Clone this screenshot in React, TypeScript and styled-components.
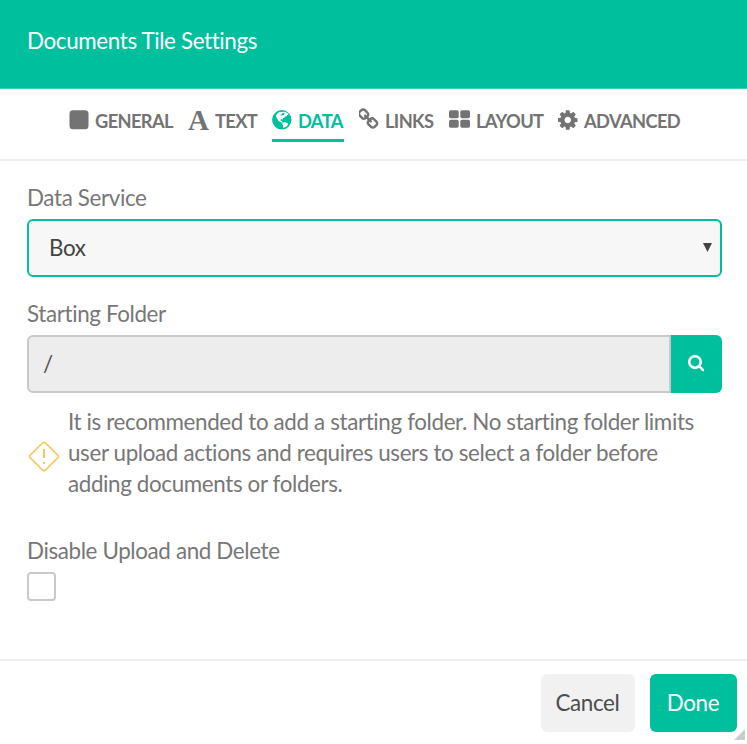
import React from "react";
import styled, { createGlobalStyle } from "styled-components";

const GlobalStyle = createGlobalStyle`
  *, *::before, *::after { box-sizing: border-box; }
  body { margin: 0; background: #fff; }
`;

const Dialog = styled.main`
  position: relative;
  display: flex;
  flex-direction: column;
  width: 747px;
  height: 744px;
  overflow: hidden;
  background: #fff;
  color: #777;
  font-family: Lato, "Liberation Sans", sans-serif;
  font-size: 22.4px;
  letter-spacing: -0.37px;
  line-height: 31px;
`;

const Header = styled.header`
  height: 89px;
  flex: none;
  padding: 25px 27px 0;
  background: #00bf9d;
  border-bottom: 1px solid #40cfb6;
  color: #fff;
`;

const Title = styled.h1`
  margin: 0;
  font-size: 22.4px;
  font-weight: 400;
  line-height: 31px;
`;

const Tabs = styled.nav`
  display: flex;
  gap: 15px;
  height: 72px;
  flex: none;
  padding: 18px 0 0 69px;
  border-bottom: 2px solid #eee;
`;

const Tab = styled.a<{ $active?: boolean; $width: number }>`
  display: flex;
  align-items: center;
  width: ${(p) => p.$width}px;
  height: 35px;
  padding-bottom: 5px;
  border-bottom: 3px solid ${(p) => (p.$active ? "#00bf9d" : "transparent")};
  color: ${(p) => (p.$active ? "#00bf9d" : "#737373")};
  font-size: 18.3px;
  font-weight: 700;
  letter-spacing: -0.63px;
  line-height: 24px;
  white-space: nowrap;
`;

const TabIcon = styled.span<{ $advance: number }>`
  width: ${(p) => p.$advance}px;
  flex: none;
  padding-bottom: 2px;
`;

const Icon = styled.svg`
  display: block;
  flex: none;
  fill: currentColor;
`;

const LetterIcon = styled.span`
  display: block;
  font-family: "Liberation Serif", serif;
  font-size: 29px;
  font-weight: 700;
  line-height: 22px;
`;

const Body = styled.section`
  flex: 1;
  padding: 21px 25px 0 27px;
`;

const Field = styled.div<{ $after?: number }>`
  display: flex;
  flex-direction: column;
  gap: 6px;
  margin-bottom: ${(p) => p.$after ?? 0}px;
`;

const Select = styled.div`
  display: flex;
  align-items: center;
  justify-content: space-between;
  height: 58px;
  padding: 0 8px 1px 20px;
  border: 2px solid #00bf9d;
  border-radius: 6px;
  background: #f7f7f7;
  color: #444;
`;

const InputGroup = styled.div`
  display: flex;
  height: 58px;
`;

const FolderInput = styled.div`
  flex: 1;
  padding: 11px 14px;
  border: 2px solid #c9c9c9;
  border-radius: 6px 0 0 6px;
  background: #ededed;
  color: #555;
`;

const SearchButton = styled.button`
  display: flex;
  align-items: center;
  justify-content: center;
  width: 51px;
  padding: 0 1px 1px 0;
  border: 0;
  border-radius: 0 6px 6px 0;
  background: #00bf9d;
  color: #fff;
`;

const Notice = styled.div`
  display: flex;
  align-items: center;
  gap: 7px;
  margin-bottom: 36px;
`;

const NoticeIcon = styled.span`
  padding-top: 6px;
`;

const NoticeText = styled.p`
  margin: 0;
  line-height: 30.8px;
  white-space: nowrap;
`;

const Checkbox = styled.span`
  width: 29px;
  height: 29px;
  border: 2px solid #c9c9c9;
  border-radius: 4px;
`;

const Footer = styled.footer`
  display: flex;
  justify-content: flex-end;
  gap: 15px;
  height: 85px;
  flex: none;
  padding: 13px 10.5px 0 0;
  border-top: 2px solid #eee;
`;

const Button = styled.button<{ $primary?: boolean }>`
  width: ${(p) => (p.$primary ? 87 : 94)}px;
  height: 58px;
  padding: 0 0 1px;
  border: 0;
  border-radius: 6px;
  background: ${(p) => (p.$primary ? "#00bf9d" : "#f1f1f1")};
  color: ${(p) => (p.$primary ? "#fff" : "#4c4c4c")};
  font: inherit;
  letter-spacing: inherit;
`;

const ResizeGrip = styled.svg`
  position: absolute;
  right: 2px;
  bottom: 4px;
`;

const SquareIcon = () => (
  <Icon width="20" height="20" viewBox="0 0 20 20">
    <rect x="0.5" y="0.3" width="19" height="19" rx="3.5" />
  </Icon>
);

const GlobeIcon = () => (
  <Icon width="20" height="20" viewBox="0 0 20 20">
    <circle cx="9.8" cy="9.8" r="9.7" />
    <path
      fill="#fff"
      d="M5.400 3.200 7.600 1.900 9.800 2.100 12.600 1.700 15.200 3 16.600 4.500 15.200 5 14.600 6.400 13.200 6.200 12.400 7.800 11 8.200 10.500 9.700 9.200 9.100 8.300 9.900 9 10.800 10.200 11.200 10.300 12.400 11.500 12.600 13.200 12.300 15.500 13.200 16.300 14.300 14.800 16.200 12.400 17.600 11.100 18 11.300 16 10.300 14.300 10.500 13 8.900 12.300 6.600 11 5.400 9 4.300 7.200 4.100 5.400Z"
    />
    <path d="M10.500 2.900 12.300 2.800 12.600 3.900 11.200 5.400 10 5 9.200 5.700 8.100 5 9.400 4.400Z" />
  </Icon>
);

const LinkIcon = () => (
  <Icon width="22.7" height="22.7" viewBox="120 0 1792 1792">
    <path d="M1456 1216q0-40-28-68l-208-208q-28-28-68-28-42 0-72 32 3 3 19 18.5t21.5 21.5 15 19 13 25.5 3.5 27.5q0 40-28 68t-68 28q-15 0-27.5-3.5t-25.5-13-19-15-21.5-21.5-18.5-19q-33 31-33 73 0 40 28 68l206 207q27 27 68 27 40 0 68-26l147-146q28-28 28-67zm-703-705q0-40-28-68l-206-207q-28-28-68-28-39 0-68 27l-147 146q-28 28-28 67 0 40 28 68l208 208q27 27 68 27 42 0 72-31-3-3-19-18.5t-21.500-21.500-15-19-13-25.500-3.500-27.500q0-40 28-68t68-28q15 0 27.500 3.500t25.500 13 19 15 21.500 21.500 18.500 19q33-31 33-73zm895 705q0 120-85 203l-147 146q-83 83-203 83-121 0-204-85l-206-207q-83-83-83-203 0-123 88-209l-88-88q-86 88-208 88-120 0-204-84l-208-208q-84-84-84-204t85-203l147-146q83-83 203-83 121 0 204 85l206 207q83 83 83 203 0 123-88 209l88 88q86-88 208-88 120 0 204 84l208 208q84 84 84 204z" />
  </Icon>
);

const LayoutIcon = () => (
  <Icon width="21" height="20" viewBox="0 0 21 20">
    <rect x="0" y="0.2" width="9.7" height="8" rx="1.7" />
    <rect x="11.300" y="0.2" width="9.700" height="8" rx="1.700" />
    <rect x="0" y="9.800" width="9.700" height="8" rx="1.700" />
    <rect x="11.300" y="9.800" width="9.700" height="8" rx="1.700" />
  </Icon>
);

const CogIcon = () => (
  <Icon width="19.5" height="20" viewBox="128 128 1536 1536">
    <path d="M1152 896q0-106-75-181t-181-75-181 75-75 181 75 181 181 75 181-75 75-181zm512-109v222q0 12-8 23t-20 13l-185 28q-19 54-39 91 35 50 107 138 10 12 10 25t-9 23q-27 37-99 108t-94 71q-12 0-26-9l-138-108q-44 23-91 38-16 136-29 186-7 28-36 28h-222q-14 0-24.500-8.500t-11.500-21.500l-28-184q-49-16-90-37l-141 107q-10 9-25 9-14 0-25-11-126-114-165-168-7-10-7-23 0-12 8-23 15-21 51-66.500t54-70.500q-27-50-41-99l-183-27q-13-2-21-12.500t-8-23.500v-222q0-12 8-23t19-13l186-28q14-46 39-92-40-57-107-138-10-12-10-24 0-10 9-23 26-36 98.500-107.500t94.500-71.500q13 0 26 10l138 107q44-23 91-38 16-136 29-186 7-28 36-28h222q14 0 24.500 8.500t11.500 21.500l28 184q49 16 90 37l142-107q9-9 24-9 13 0 25 10 129 119 165 170 7 8 7 22 0 12-8 23-15 21-51 66.500t-54 70.500q26 50 41 98l183 28q13 2 21 12.500t8 23.500z" />
  </Icon>
);

const SearchIcon = () => (
  <Icon width="16.500" height="16.500" viewBox="64 128 1664 1664">
    <path d="M1216 832q0-185-131.500-316.500t-316.500-131.500-316.500 131.500-131.500 316.500 131.500 316.500 316.500 131.500 316.500-131.500 131.500-316.500zm512 832q0 52-38 90t-90 38q-54 0-90-38l-343-342q-179 124-399 124-143 0-273.500-55.500t-225-150-150-225-55.500-273.500 55.500-273.500 150-225 225-150 273.500-55.500 273.500 55.500 225 150 150 225 55.500 273.500q0 220-124 399l343 343q37 37 37 90z" />
  </Icon>
);

const WarningIcon = () => (
  <Icon width="34" height="32" viewBox="0 0 34 32">
    <path
      d="M15.6 2.9Q17 1.700 18.400 2.900L30.700 15.100Q32 16.500 30.700 17.900L18.400 30Q17 31.200 15.600 30L3.300 17.900Q2 16.500 3.300 15.100Z"
      fill="none"
      stroke="#f6cb5e"
      strokeWidth="1.700"
    />
    <path d="M17 9v9M17 21.700v2.300" fill="none" stroke="#f6cb5e" strokeWidth="2" />
  </Icon>
);

const tabs = [
  { label: "GENERAL", icon: <SquareIcon />, width: 104, advance: 26 },
  { label: "TEXT", icon: <LetterIcon>A</LetterIcon>, width: 69, advance: 27 },
  { label: "DATA", icon: <GlobeIcon />, width: 72, advance: 26, active: true },
  { label: "LINKS", icon: <LinkIcon />, width: 75, advance: 26 },
  { label: "LAYOUT", icon: <LayoutIcon />, width: 94, advance: 27 },
  { label: "ADVANCED", icon: <CogIcon />, width: 122, advance: 26 },
];

export default function App() {
  return (
    <Dialog>
      <GlobalStyle />
      <Header>
        <Title>Documents Tile Settings</Title>
      </Header>
      <Tabs>
        {tabs.map((tab) => (
          <Tab key={tab.label} $active={tab.active} $width={tab.width}>
            <TabIcon $advance={tab.advance}>{tab.icon}</TabIcon>
            <span>{tab.label}</span>
          </Tab>
        ))}
      </Tabs>
      <Body>
        <Field $after={21}>
          <span>Data Service</span>
          <Select>
            Box
            <Icon width="9" height="9" viewBox="0 0 9 9">
              <path d="M0 0h9L4.500 9Z" />
            </Icon>
          </Select>
        </Field>
        <Field $after={14}>
          <span>Starting Folder</span>
          <InputGroup>
            <FolderInput>/</FolderInput>
            <SearchButton aria-label="Search">
              <SearchIcon />
            </SearchButton>
          </InputGroup>
        </Field>
        <Notice>
          <NoticeIcon>
            <WarningIcon />
          </NoticeIcon>
          <NoticeText>
            It is recommended to add a starting folder. No starting folder limits
            <br />
            user upload actions and requires users to select a folder before
            <br />
            adding documents or folders.
          </NoticeText>
        </Notice>
        <Field>
          <span>Disable Upload and Delete</span>
          <Checkbox role="checkbox" aria-checked="false" />
        </Field>
      </Body>
      <Footer>
        <Button>Cancel</Button>
        <Button $primary>Done</Button>
      </Footer>
      <ResizeGrip width="11" height="11" viewBox="0 0 11 11">
        <path d="M11 0v11H0Z" fill="#d0d0d0" />
        <path d="M11 3.500 3.500 11M11 7.500 7.500 11" stroke="#bdbdbd" strokeWidth="1" />
      </ResizeGrip>
    </Dialog>
  );
}
